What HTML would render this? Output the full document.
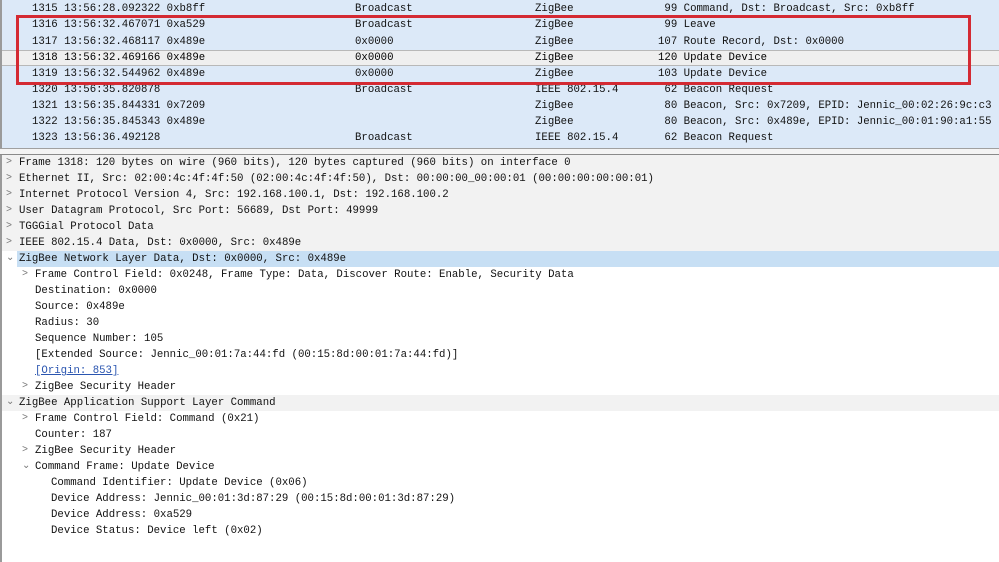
<!DOCTYPE html>
<html><head><style>
body{margin:0;width:999px;height:562px;overflow:hidden;background:#fff;font-family:"Liberation Mono",monospace;font-size:10.7px;color:#111;position:relative}
.list{position:absolute;left:0;top:0;width:999px;height:148px;background:#dce9f8;border-left:2px solid #9a9a9a;box-sizing:border-box}
.r{position:absolute;left:0;height:16px;width:999px;line-height:16px;white-space:pre}
.r span{position:absolute;top:0}
.sel{background:#efefef;border-top:1px solid #b8b8b8;border-bottom:1px solid #b8b8b8;box-sizing:border-box;line-height:14px}
.box{position:absolute;left:16px;top:15px;width:955px;height:70px;border:3px solid #d42a33;box-sizing:border-box}
.sep{position:absolute;left:0;top:148px;width:999px;height:7px;background:#f4f4f4;border-top:1px solid #a0a0a0;border-bottom:1px solid #8a8a8a;box-sizing:border-box}
.det{position:absolute;left:0;top:155px;width:999px;height:407px;border-left:2px solid #9a9a9a;box-sizing:border-box}
.d{position:absolute;left:0;width:999px;height:16px;line-height:16px;white-space:pre}
.g{background:#f2f2f2}
.b{background:#c7dff4}
.a{position:absolute;color:#777;font-size:10px}
a{color:#2a55b0;text-decoration:underline}
</style></head><body>
<div class="list">
<div class="r" style="top:1px"><span style="left:30px">1315 13:56:28.092322 0xb8ff</span><span style="left:353px">Broadcast</span><span style="left:533px">ZigBee</span><span style="left:656px"> 99 Command, Dst: Broadcast, Src: 0xb8ff</span></div>
<div class="r" style="top:17px"><span style="left:30px">1316 13:56:32.467071 0xa529</span><span style="left:353px">Broadcast</span><span style="left:533px">ZigBee</span><span style="left:656px"> 99 Leave</span></div>
<div class="r" style="top:34px"><span style="left:30px">1317 13:56:32.468117 0x489e</span><span style="left:353px">0x0000</span><span style="left:533px">ZigBee</span><span style="left:656px">107 Route Record, Dst: 0x0000</span></div>
<div class="r sel" style="top:50px;color:#000"><span style="left:30px">1318 13:56:32.469166 0x489e</span><span style="left:353px">0x0000</span><span style="left:533px">ZigBee</span><span style="left:656px">120 Update Device</span></div>
<div class="r" style="top:66px"><span style="left:30px">1319 13:56:32.544962 0x489e</span><span style="left:353px">0x0000</span><span style="left:533px">ZigBee</span><span style="left:656px">103 Update Device</span></div>
<div class="r" style="top:82px"><span style="left:30px">1320 13:56:35.820878</span><span style="left:353px">Broadcast</span><span style="left:533px">IEEE 802.15.4</span><span style="left:656px"> 62 Beacon Request</span></div>
<div class="r" style="top:98px"><span style="left:30px">1321 13:56:35.844331 0x7209</span><span style="left:533px">ZigBee</span><span style="left:656px"> 80 Beacon, Src: 0x7209, EPID: Jennic_00:02:26:9c:c3</span></div>
<div class="r" style="top:114px"><span style="left:30px">1322 13:56:35.845343 0x489e</span><span style="left:533px">ZigBee</span><span style="left:656px"> 80 Beacon, Src: 0x489e, EPID: Jennic_00:01:90:a1:55</span></div>
<div class="r" style="top:130px"><span style="left:30px">1323 13:56:36.492128</span><span style="left:353px">Broadcast</span><span style="left:533px">IEEE 802.15.4</span><span style="left:656px"> 62 Beacon Request</span></div>
</div>
<div class="box"></div>
<div class="sep"></div>
<div class="det">
<div class="d g" style="top:0"><span class="a" style="left:4px">&gt;</span><span style="position:absolute;left:17px">Frame 1318: 120 bytes on wire (960 bits), 120 bytes captured (960 bits) on interface 0</span></div>
<div class="d g" style="top:16px"><span class="a" style="left:4px">&gt;</span><span style="position:absolute;left:17px">Ethernet II, Src: 02:00:4c:4f:4f:50 (02:00:4c:4f:4f:50), Dst: 00:00:00_00:00:01 (00:00:00:00:00:01)</span></div>
<div class="d g" style="top:32px"><span class="a" style="left:4px">&gt;</span><span style="position:absolute;left:17px">Internet Protocol Version 4, Src: 192.168.100.1, Dst: 192.168.100.2</span></div>
<div class="d g" style="top:48px"><span class="a" style="left:4px">&gt;</span><span style="position:absolute;left:17px">User Datagram Protocol, Src Port: 56689, Dst Port: 49999</span></div>
<div class="d g" style="top:64px"><span class="a" style="left:4px">&gt;</span><span style="position:absolute;left:17px">TGGGial Protocol Data</span></div>
<div class="d g" style="top:80px"><span class="a" style="left:4px">&gt;</span><span style="position:absolute;left:17px">IEEE 802.15.4 Data, Dst: 0x0000, Src: 0x489e</span></div>
<div class="d" style="top:96px"><span class="a" style="left:4px">&#8964;</span><span class="b" style="position:absolute;left:15px;right:0;padding-left:2px">ZigBee Network Layer Data, Dst: 0x0000, Src: 0x489e</span></div>
<div class="d" style="top:112px"><span class="a" style="left:20px">&gt;</span><span style="position:absolute;left:33px">Frame Control Field: 0x0248, Frame Type: Data, Discover Route: Enable, Security Data</span></div>
<div class="d" style="top:128px"><span style="position:absolute;left:33px">Destination: 0x0000</span></div>
<div class="d" style="top:144px"><span style="position:absolute;left:33px">Source: 0x489e</span></div>
<div class="d" style="top:160px"><span style="position:absolute;left:33px">Radius: 30</span></div>
<div class="d" style="top:176px"><span style="position:absolute;left:33px">Sequence Number: 105</span></div>
<div class="d" style="top:192px"><span style="position:absolute;left:33px">[Extended Source: Jennic_00:01:7a:44:fd (00:15:8d:00:01:7a:44:fd)]</span></div>
<div class="d" style="top:208px"><span style="position:absolute;left:33px"><a>[Origin: 853]</a></span></div>
<div class="d" style="top:224px"><span class="a" style="left:20px">&gt;</span><span style="position:absolute;left:33px">ZigBee Security Header</span></div>
<div class="d g" style="top:240px"><span class="a" style="left:4px">&#8964;</span><span style="position:absolute;left:17px">ZigBee Application Support Layer Command</span></div>
<div class="d" style="top:256px"><span class="a" style="left:20px">&gt;</span><span style="position:absolute;left:33px">Frame Control Field: Command (0x21)</span></div>
<div class="d" style="top:272px"><span style="position:absolute;left:33px">Counter: 187</span></div>
<div class="d" style="top:288px"><span class="a" style="left:20px">&gt;</span><span style="position:absolute;left:33px">ZigBee Security Header</span></div>
<div class="d" style="top:304px"><span class="a" style="left:20px">&#8964;</span><span style="position:absolute;left:33px">Command Frame: Update Device</span></div>
<div class="d" style="top:320px"><span style="position:absolute;left:49px">Command Identifier: Update Device (0x06)</span></div>
<div class="d" style="top:336px"><span style="position:absolute;left:49px">Device Address: Jennic_00:01:3d:87:29 (00:15:8d:00:01:3d:87:29)</span></div>
<div class="d" style="top:352px"><span style="position:absolute;left:49px">Device Address: 0xa529</span></div>
<div class="d" style="top:368px"><span style="position:absolute;left:49px">Device Status: Device left (0x02)</span></div>
</div>
</body></html>
